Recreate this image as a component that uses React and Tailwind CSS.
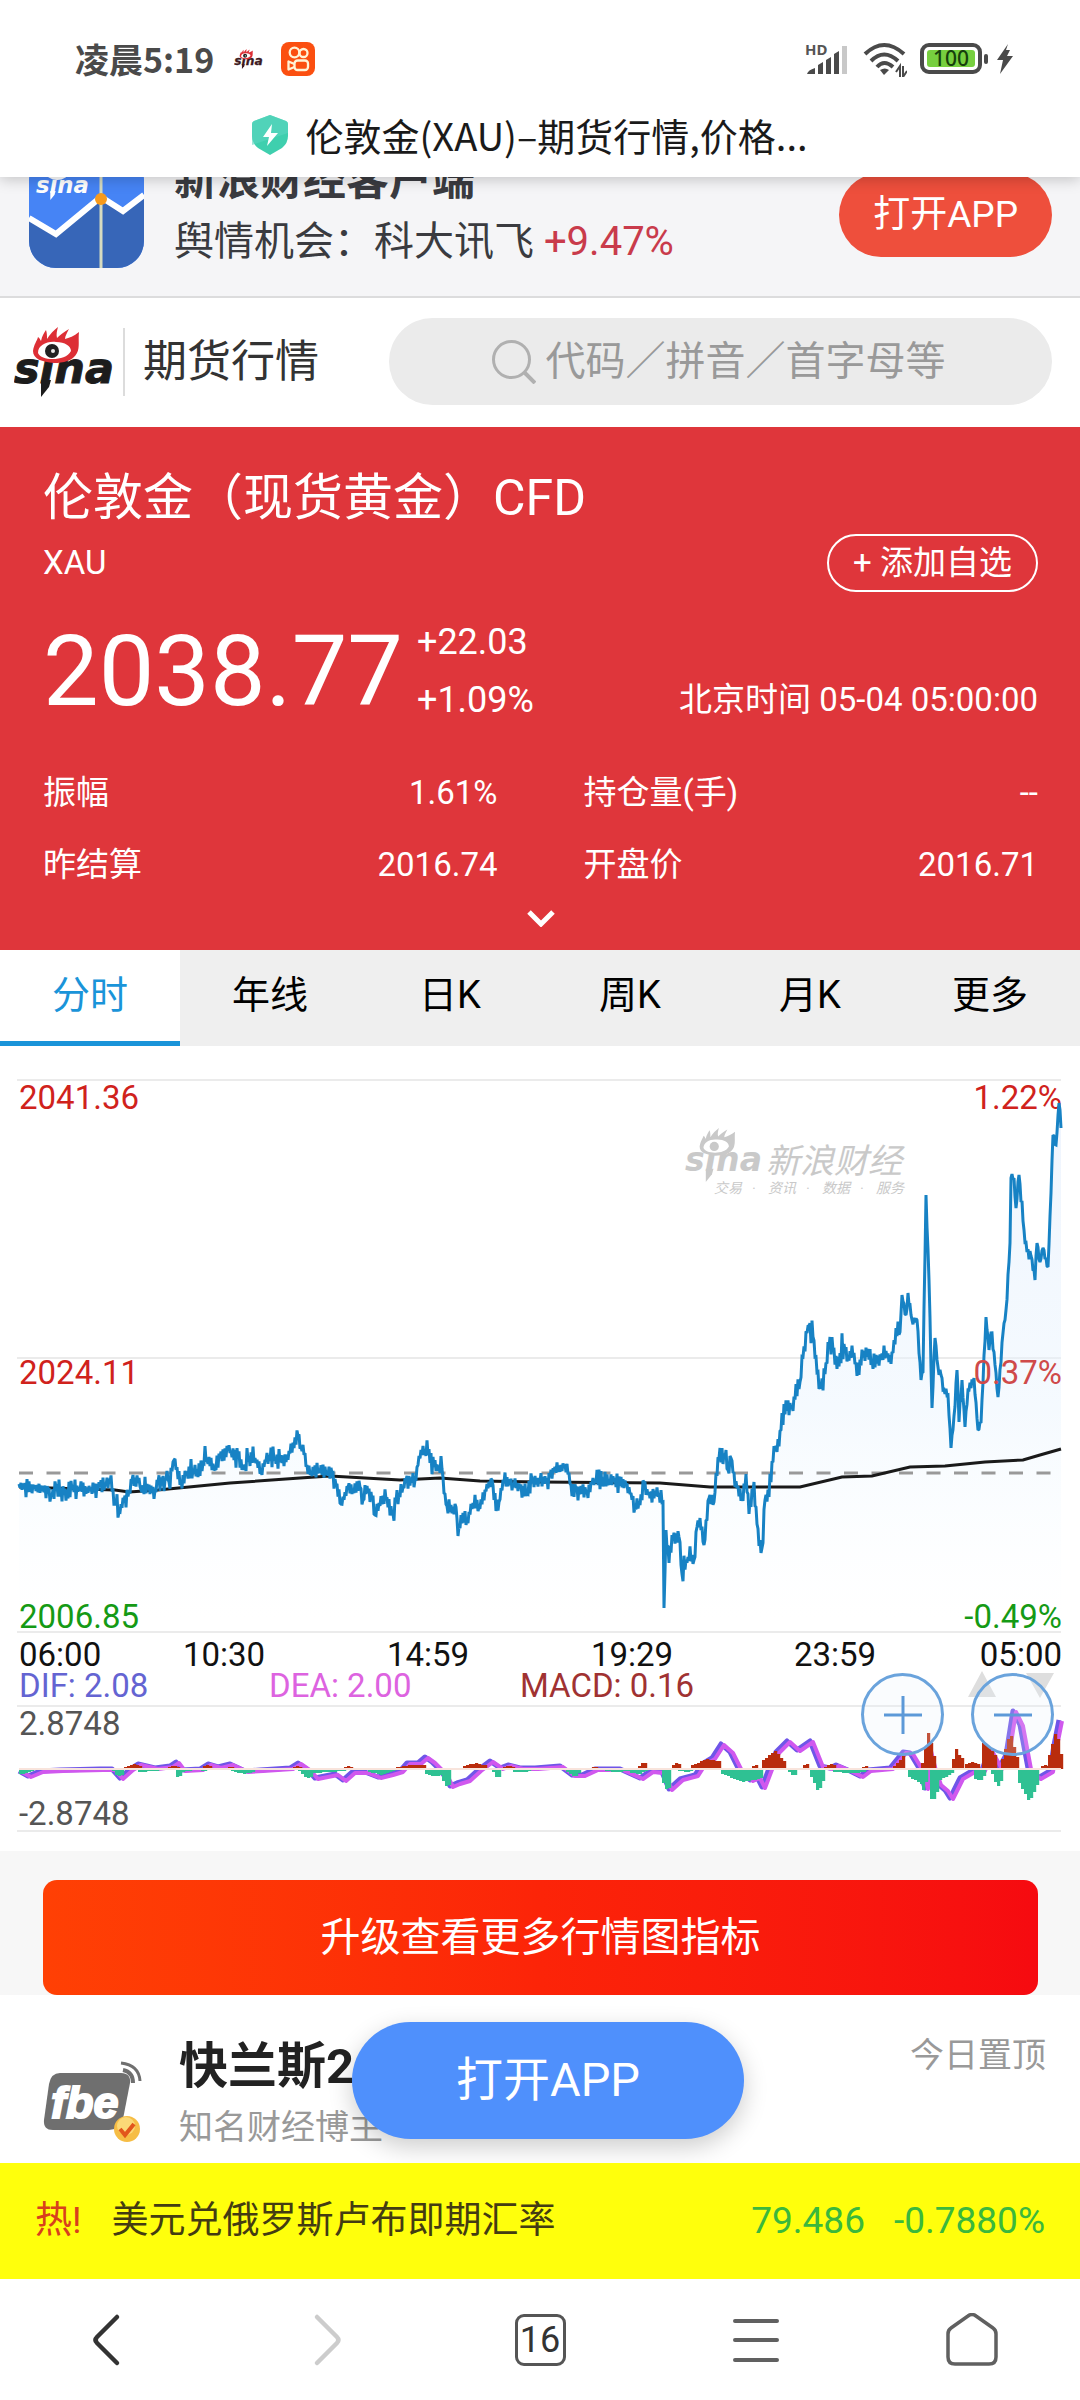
import React from "react";

/* ---------- chart data ---------- */

const PRICE = [
  19,1484,24,1489,34,1488,48,1489,51,1495,56,1487,64,1494,72,1489,79,1488,90,1491,100,1487,105,1484,110,1482,112,1490,
  115,1499,119,1512,124,1500,129,1491,132,1480,138,1483,139,1478,141,1490,148,1488,155,1490,158,1482,165,1480,167,1471,
  169,1482,174,1460,177,1467,180,1485,186,1475,193,1469,200,1476,203,1463,205,1446,207,1460,215,1469,220,1457,226,1457,
  227,1446,230,1453,238,1458,244,1470,249,1456,255,1458,261,1472,265,1460,269,1455,275,1458,286,1462,289,1451,294,1448,
  298,1436,301,1447,305,1453,307,1465,311,1473,319,1470,327,1472,332,1473,336,1485,341,1504,348,1488,353,1490,360,1487,
  363,1500,367,1486,372,1500,375,1515,379,1503,386,1499,393,1514,396,1502,403,1487,406,1480,415,1480,418,1465,421,1450,
  425,1452,429,1449,430,1463,434,1467,442,1469,444,1493,447,1506,450,1512,456,1507,458,1536,461,1515,467,1521,473,1503,
  479,1508,485,1490,492,1480,496,1511,499,1502,503,1480,513,1483,520,1488,527,1494,532,1480,540,1481,547,1478,554,1470,
  564,1467,569,1473,572,1496,576,1489,586,1492,588,1498,591,1482,595,1480,609,1480,615,1478,626,1485,631,1493,635,1507,
  640,1505,644,1482,648,1495,659,1493,663,1502
];
const PRICE_LATE = [
  664,1608,666,1530,669,1563,672,1535,679,1537,682,1574,688,1557,694,1560,697,1527,700,1518,704,1545,709,1498,714,1502,
  716,1473,720,1448,723,1464,726,1450,728,1470,731,1458,733,1473,737,1488,743,1501,746,1474,749,1514,754,1482,756,1507,
  759,1546,762,1548,765,1500,769,1497,774,1446,777,1452,781,1430,784,1404,790,1403,793,1411,796,1384,800,1382,803,1357,
  807,1333,809,1326,813,1337,815,1357,820,1387,825,1374,830,1337,833,1350,837,1369,840,1353,844,1344,848,1356,854,1353,
  857,1376,864,1351,872,1359,881,1360,886,1351,889,1362,893,1353,896,1328,900,1332
];
const PRICE_END = [
  902,1295,906,1315,908,1293,912,1320,917,1320,921,1380,923,1372,926,1195,929,1280,932,1408,935,1338,938,1367,941,1375,
  943,1390,948,1395,951,1448,954,1416,957,1370,959,1422,962,1380,965,1427,968,1390,974,1378,978,1430,981,1423,986,1317,
  989,1350,991,1333,994,1352,998,1397,1003,1333,1006,1310,1010,1243,1011,1178,1014,1178,1016,1208,1019,1175,1024,1230,
  1027,1252,1031,1256,1035,1280,1037,1243,1040,1262,1043,1248,1048,1267,1051,1193,1053,1135,1056,1145,1059,1103,1061,1128
];
const AVERAGE =
  "19,1487 115,1490 129,1492 158,1490 230,1483 300,1478 330,1476 400,1480 440,1478 480,1481 540,1482 660,1483 710,1487 800,1487 842,1477 872,1476 910,1467 945,1466 985,1462 1023,1460 1040,1455 1061,1449";

function pseudoRandom(seed) {
  let s = seed;
  return () => {
    s = (s * 16807) % 2147483647;
    return s / 2147483647;
  };
}

function jitter(list, amp, seed) {
  const rnd = pseudoRandom(seed);
  const out = [];
  let side = 1;
  for (let i = 0; i < list.length - 2; i += 2) {
    const [x1, y1, x2, y2] = list.slice(i, i + 4);
    const n = Math.max(1, Math.round(x2 - x1));
    for (let k = 0; k < n; k++) {
      side = -side;
      const noise = k === 0 ? 0 : side * amp * (0.35 + rnd() * rnd() * 1.6);
      out.push([x1 + ((x2 - x1) * k) / n, y1 + ((y2 - y1) * k) / n + noise]);
    }
  }
  out.push([list[list.length - 2], list[list.length - 1]]);
  return out;
}

const LINE = [...jitter(PRICE, 7, 77), ...jitter(PRICE_LATE, 8, 911), ...jitter(PRICE_END, 4, 35)]
  .map(([x, y]) => `${x.toFixed(1)},${y.toFixed(1)}`)
  .join(" ");

/* [start, end, height at start, peak, height at end] */
const UP = [
  [124,141,2,5,2],[165,180,1,3,2],[200,212,1,4,2],[222,236,1,2,1],[290,303,1,3,1],[344,351,2,3,1],[396,424,2,4,4],[463,486,3,6,3],[500,515,1,4,1],
  [586,600,1,2,1],[638,647,3,7,4],[672,680,4,6,4],[691,721,4,10,7],[752,756,3,5,2],[762,786,9,18,4],[803,809,4,5,3],
  [824,836,2,5,2],[862,866,2,4,2],[893,905,3,9,16],[921,934,6,38,8],[952,963,10,14,9],[955,957,20,20,20],[965,979,5,7,4],
  [982,995,26,22,12],[1001,1017,10,36,8],[1041,1048,3,4,3],[1048,1062,14,39,6]
];
const DOWN = [
  [19,34,5,4,1],[112,122,2,8,5],[138,165,3,2,1],[176,183,8,7,2],[183,207,2,1,2],[231,255,2,5,2],[298,313,2,9,8],
  [313,344,4,3,2],[368,393,3,6,2],[425,441,5,7,6],[442,451,12,19,10],[492,501,3,10,4],[513,530,3,3,2],[566,581,3,8,2],
  [599,630,1,3,2],[630,647,4,5,1],[662,671,14,23,10],[678,695,2,3,1],[721,762,5,13,9],[788,797,3,8,2],[810,824,8,23,8],
  [833,865,3,4,3],[908,922,8,12,16],[919,926,12,22,10],[930,938,30,30,16],[936,953,12,8,3],[974,984,10,12,6],
  [991,1001,5,19,10],[1018,1038,14,33,12]
];

function Bars({ data, up, color }) {
  const zero = 1769;
  const bars = [];
  data.forEach(([a, b, h0, hp, h1], j) => {
    const mid = (a + b) / 2;
    for (let x = a; x < b; x += 3) {
      const h =
        x < mid ? h0 + ((hp - h0) * (x - a)) / (mid - a) : hp + ((h1 - hp) * (x - mid)) / (b - mid);
      const r = Math.round(h);
      bars.push(<rect key={`${j}-${x}`} x={x} y={up ? zero - r : zero} width="3.2" height={r} fill={color} />);
    }
  });
  return <g>{bars}</g>;
}

const MACD_LINE =
  "19,1771 28,1776 40,1771 60,1770 100,1769 112,1769 120,1778 130,1769 138,1764 155,1768 170,1766 176,1762 182,1770 200,1769 208,1764 218,1767 230,1764 245,1771 260,1770 290,1768 298,1763 308,1770 315,1778 335,1774 343,1780 352,1772 365,1772 378,1777 390,1774 400,1771 407,1763 418,1763 425,1757 432,1762 440,1770 446,1778 450,1786 457,1783 467,1780 478,1770 490,1761 500,1768 508,1765 520,1768 535,1768 560,1766 572,1775 582,1775 595,1769 620,1769 640,1778 650,1771 662,1772 669,1789 680,1779 695,1775 702,1764 712,1758 721,1744 730,1752 739,1770 750,1780 757,1777 762,1787 770,1766 776,1752 787,1741 797,1750 810,1741 820,1766 830,1768 836,1765 850,1771 860,1776 868,1770 890,1768 903,1752 910,1753 919,1768 925,1788 928,1750 933,1770 938,1784 945,1790 950,1798 954,1790 960,1778 972,1771 982,1770 989,1750 999,1768 1006,1755 1013,1711 1020,1725 1028,1768 1032,1774 1038,1778 1050,1771 1054,1745 1059,1720";

/* ---------- icons ---------- */

function SinaLogo({ className, ink = "#1c1c1c", red = "#dd2f36", eye = "#fff", pupil = "#222" }) {
  return (
    <svg viewBox="0 0 100 70" className={className} role="img" aria-label="sina">
      <text x="0" y="56" fontFamily="DejaVu Sans" fontWeight="700" fontStyle="italic" fontSize="43" fill={ink} stroke={ink} strokeWidth="1">
        sina
      </text>
      <path d="M27 53 L37 53 L35 60 L27 70 Z" fill={ink} />
      <path
        d="M19 24 C20 17 23 14 24 10 C26 11 26 13 27 14 C28 9 30 6 32 3 C33 6 33 9 33 12 C36 7 40 3 44 0 C43 4 42 7 43 11 C46 8 50 5 55 2 C53 6 51 9 51 12 C55 11 60 9 65 5 C64 13 66 20 63 26 C59 34 49 36 40 36 C28 35 19 32 19 24 Z"
        fill={red}
      />
      <path d="M24 26 C24 18 33 14 42 15 C51 15 57 19 57 24 C54 30 46 32 39 32 C31 32 26 30 24 26 Z" fill={eye} />
      <circle cx="38" cy="24" r="7" fill={pupil} />
      <circle cx="39" cy="24" r="2" fill={eye} opacity="0.9" />
    </svg>
  );
}

function KuaishouIcon() {
  return (
    <svg viewBox="0 0 34 34" className="size-[34px]" role="img" aria-label="kuaishou">
      <rect width="34" height="34" rx="8" fill="#fb4f10" />
      <g fill="none" stroke="#fff3d6" strokeWidth="2.3" strokeLinejoin="round">
        <circle cx="13.500" cy="10.500" r="4.800" />
        <circle cx="22.500" cy="11" r="4" />
        <rect x="13.500" y="18.500" width="13.500" height="9.500" rx="3" />
        <path d="M13.500 22 L7.500 19.500 V27.500 L13.500 25" />
      </g>
    </svg>
  );
}

function StatusIcons() {
  return (
    <div className="flex items-center">
      <svg viewBox="0 0 42 34" className="h-[34px] w-[42px] overflow-visible" role="img" aria-label="signal">
        <text x="0" y="13" fontFamily="Noto Sans" fontWeight="700" fontSize="15" fill="#555">HD</text>
        <path d="M2 32 q1-4 8-6 v6z M13 23 l5-3 v12 h-5z M21 18 l5-3 v17 h-5z M29 12 l5-3 v23 h-5z" fill="#4a4a4a" />
        <rect x="37" y="4" width="5" height="28" fill="#c8c8c8" />
      </svg>
      <svg viewBox="0 0 44 36" className="ml-4 h-[36px] w-[44px]" role="img" aria-label="wifi">
        <g fill="none" stroke="#4a4a4a" strokeWidth="4">
          <path d="M2 13 Q21 -5 41 13" />
          <path d="M8 20 Q21 7 35 20" />
          <path d="M14 26 Q21 18 30 26" />
        </g>
        <path d="M17 29 q5-3 9 0 l-5 5z" fill="#4a4a4a" />
        <path d="M37 36 V25 l-4 6 M40 25 V36 l4-6" fill="none" stroke="#4a4a4a" strokeWidth="2" />
      </svg>
      <svg viewBox="0 0 70 32" className="ml-[13px] h-[32px] w-[70px]" role="img" aria-label="battery">
        <rect x="2" y="2" width="58" height="27" rx="7" fill="#fff" stroke="#4a4a4a" strokeWidth="4" />
        <rect x="7" y="7" width="48" height="17" rx="3" fill="#77cf3f" />
        <rect x="64" y="11" width="4" height="10" rx="2" fill="#4a4a4a" />
        <text x="31" y="23" textAnchor="middle" fontFamily="Noto Sans" fontWeight="500" fontSize="21" fill="#163f0c">100</text>
      </svg>
      <svg viewBox="0 0 18 32" className="ml-[6px] h-[32px] w-[18px]" role="img" aria-label="charging">
        <path d="M12 1 L1 17 H7 L4 31 L17 13 H11 L14 7 H10 Z" fill="#4a4a4a" />
      </svg>
    </div>
  );
}

function ShieldIcon() {
  return (
    <svg viewBox="0 0 36 40" className="h-[40px] w-[36px]" aria-hidden="true">
      <path d="M18 0 L34 6 Q36 7 36 9 V21 Q36 28 30 33 L18 40 L6 33 Q0 28 0 21 V9 Q0 7 2 6 Z" fill="#3fcfae" />
      <path d="M18 0 L34 6 Q36 7 36 9 V18 L0 30 V9 Q0 7 2 6 Z" fill="#5bd6c0" opacity="0.6" />
      <path d="M20 9 L11 22 H17 L15 31 L26 18 H19 Z" fill="#fff" />
    </svg>
  );
}

function FinanceAppIcon() {
  return (
    <svg viewBox="0 0 115 115" className="size-[115px] shrink-0" aria-hidden="true">
      <defs>
        <clipPath id="appClip"><rect width="115" height="115" rx="27" /></clipPath>
      </defs>
      <g clipPath="url(#appClip)">
        <rect width="115" height="115" fill="#4684f5" />
        <path d="M0 65 L27 82 L72 44 L94 60 L115 43 V115 H0 Z" fill="#3766b8" />
        <path d="M0 65 L27 81 L72 44 L94 58 L115 42" fill="none" stroke="#fff" strokeWidth="6" />
        <path d="M72 0 V115" stroke="#d6dbc0" strokeWidth="3" />
        <circle cx="72" cy="46" r="6" fill="#f79a1c" />
        <g transform="translate(7 10) scale(0.53)">
          <text x="0" y="56" fontFamily="DejaVu Sans" fontWeight="700" fontStyle="italic" fontSize="43" fill="#fff">sina</text>
          <path d="M27 53 L37 53 L35 60 L27 70 Z" fill="#fff" />
          <ellipse cx="40" cy="18" rx="21" ry="14" fill="#fff" />
          <ellipse cx="40" cy="18" rx="14" ry="8" fill="#4684f5" />
          <circle cx="40" cy="18" r="5" fill="#fff" />
        </g>
      </g>
    </svg>
  );
}

function FbeAvatar() {
  return (
    <svg viewBox="0 0 100 82" className="h-[82px] w-[100px] shrink-0" role="img" aria-label="fbe">
      <path d="M17 12 H78 Q88 12 87 22 L80 58 Q77 69 66 69 H10 Q0 69 1 59 L6 23 Q8 12 17 12 Z" fill="#6f6f6f" />
      <g fill="none" stroke="#6f6f6f" strokeWidth="3">
        <path d="M78 2 Q96 4 97 20" />
        <path d="M80 9 Q90 11 90 22" strokeWidth="4" />
      </g>
      <text x="8" y="57" fontFamily="Liberation Sans" fontWeight="700" fontStyle="italic" fontSize="45" fill="#fff" stroke="#fff" strokeWidth="2">
        fbe
      </text>
      <circle cx="84" cy="68" r="13" fill="#f6bd45" />
      <circle cx="83" cy="65" r="9" fill="#fbd977" />
      <path d="M77 68 L82 74 L91 63" fill="none" stroke="#e2561b" strokeWidth="4" />
    </svg>
  );
}

/* ---------- sections ---------- */

function StatusHeader() {
  return (
    <header className="relative z-10 h-[177px] bg-white shadow-[0_2px_14px_rgba(0,0,0,0.22)]">
      <div className="flex items-center justify-between pl-[75px] pr-[66px] pt-[35px]">
        <div className="flex items-center">
          <span className="font-['Noto_Sans_CJK_SC',sans-serif] text-[34px] font-bold leading-[48px] text-[#4a4a4a]">凌晨5:19</span>
          <SinaLogo className="ml-5 h-[20px] w-[29px]" ink="#3d1a22" />
          <span className="ml-[18px]"><KuaishouIcon /></span>
        </div>
        <StatusIcons />
      </div>
      <div className="mt-[26px] flex items-center justify-center gap-[17px] pr-5">
        <ShieldIcon />
        <h1 className="font-['Noto_Sans_CJK_SC',sans-serif] text-[38px] leading-[52px] text-[#1a1a1a]">
          伦敦金(XAU)–期货行情,价格...
        </h1>
      </div>
    </header>
  );
}

function AppPromo() {
  return (
    <section className="overflow-hidden border-b-2 border-[#dcdcdd] bg-[#f5f5f7]">
      <div className="-mt-6 flex items-start pb-[19px] pl-[29px] pr-7">
        <FinanceAppIcon />
        <div className="ml-[30px] flex-1 text-[#3a3b40]">
          <p className="text-[43px] font-bold leading-[54px]">新浪财经客户端</p>
          <p className="text-[40px] leading-[70px]">
            舆情机会：科大讯飞 <span className="text-[#c93b4b]">+9.47%</span>
          </p>
        </div>
        <button type="button" className="mt-5 h-[84px] rounded-full bg-[#ee4f3c] px-[34px] text-[37px] leading-[84px] text-white">
          打开APP
        </button>
      </div>
    </section>
  );
}

function SearchBar() {
  return (
    <section className="flex items-center bg-white pb-[22px] pl-[14px] pr-7 pt-[20px]">
      <SinaLogo className="h-[70px] w-[100px] shrink-0" />
      <div className="ml-[9px] h-[68px] w-[2px] bg-[#dcdcdc]" />
      <h2 className="ml-[18px] whitespace-nowrap text-[44px] leading-[60px] text-[#333]">期货行情</h2>
      <label className="ml-[70px] flex h-[87px] flex-1 items-center justify-center rounded-full bg-[#ebebeb]">
        <svg viewBox="0 0 44 44" className="size-[44px] shrink-0" aria-hidden="true">
          <circle cx="19.500" cy="19.500" r="18" fill="none" stroke="#b0b0b0" strokeWidth="3" />
          <path d="M32 32 L43 43" stroke="#b0b0b0" strokeWidth="4" />
        </svg>
        <input
          type="text"
          aria-label="搜索"
          placeholder="代码／拼音／首字母等"
          className="ml-[10px] h-[60px] w-[404px] bg-transparent text-[40px] text-[#333] outline-none placeholder:text-[#999]"
        />
      </label>
    </section>
  );
}

const STATS = [
  ["振幅", "1.61%"],
  ["持仓量(手)", "--"],
  ["昨结算", "2016.74"],
  ["开盘价", "2016.71"],
];

function Quote() {
  return (
    <section className="bg-[#df363b] pb-[23px] pl-[43px] pr-[42px] pt-[41px] text-white">
      <h2 className="text-[50px] leading-[60px]">伦敦金（现货黄金）CFD</h2>
      <div className="mt-[6px] flex items-center justify-between text-[33px]">
        <span>XAU</span>
        <button type="button" className="h-[58px] rounded-full border-2 border-white px-[24px] leading-[52px]">
          + 添加自选
        </button>
      </div>
      <div className="mt-[21px] flex items-end">
        <span className="text-[99px] leading-[116px]">2038.77</span>
        <span className="ml-[14px] flex flex-col text-[36px] leading-[58px]">
          <span>+22.03</span>
          <span>+1.09%</span>
        </span>
        <span className="ml-auto text-[33px] leading-[58px]">北京时间 05-04 05:00:00</span>
      </div>
      <dl className="mt-7 grid grid-cols-2 gap-x-[86px] text-[33px] leading-[72px]">
        {STATS.map(([k, v]) => (
          <div key={k} className="flex justify-between">
            <dt>{k}</dt>
            <dd>{v}</dd>
          </div>
        ))}
      </dl>
      <button type="button" aria-label="展开" className="mx-auto mt-2 block">
        <svg viewBox="0 0 30 18" className="block h-[18px] w-[30px]" aria-hidden="true">
          <path d="M3 3 L15 15 L27 3" fill="none" stroke="#fff" strokeWidth="5" />
        </svg>
      </button>
    </section>
  );
}

function Tabs() {
  const items = ["分时", "年线", "日K", "周K", "月K", "更多"];
  return (
    <nav role="tablist" className="grid grid-cols-6 bg-[#efefef] text-[38px] leading-[91px]">
      {items.map((t, i) => (
        <button
          key={t}
          type="button"
          role="tab"
          aria-selected={i === 0}
          className={
            i === 0
              ? "border-b-[5px] border-[#1a94d9] bg-white text-[#1a94d9]"
              : "border-b-[5px] border-transparent text-black"
          }
        >
          {t}
        </button>
      ))}
    </nav>
  );
}

function Chart() {
  return (
    <section className="relative bg-white">
      <svg viewBox="0 1046 1080 805" className="block h-auto w-full" fontFamily="Roboto, Noto Sans CJK SC, sans-serif" fontSize="33">
        <defs>
          <linearGradient id="area" gradientUnits="userSpaceOnUse" x1="0" y1="1100" x2="0" y2="1620">
            <stop offset="0" stopColor="#e2ecfc" stopOpacity="0.55" />
            <stop offset="0.6" stopColor="#e9f4fe" stopOpacity="0.45" />
            <stop offset="1" stopColor="#f4fbff" stopOpacity="0" />
          </linearGradient>
        </defs>
        <g stroke="#ebebeb" strokeWidth="2">
          <path d="M17 1080 H1061 M17 1358 H1061 M17 1632 H1061 M17 1706 H1061 M17 1831 H1061" />
        </g>
        <polygon points={`19,1632 ${LINE} 1061,1632`} fill="url(#area)" />
        <g fill="#c9c9c9">
          <g transform="translate(685 1128) scale(0.77)">
            <text x="0" y="56" fontFamily="DejaVu Sans" fontWeight="700" fontStyle="italic" fontSize="43">sina</text>
            <path d="M27 53 L37 53 L35 60 L27 70 Z" />
            <path d="M19 24 C20 17 23 14 24 10 C26 11 26 13 27 14 C28 9 30 6 32 3 C33 6 33 9 33 12 C36 7 40 3 44 0 C43 4 42 7 43 11 C46 8 50 5 55 2 C53 6 51 9 51 12 C55 11 60 9 65 5 C64 13 66 20 63 26 C59 34 49 36 40 36 C28 35 19 32 19 24 Z" />
            <path d="M24 26 C24 18 33 14 42 15 C51 15 57 19 57 24 C54 30 46 32 39 32 C31 32 26 30 24 26 Z" fill="#fff" />
            <circle cx="38" cy="24" r="6" />
          </g>
          <text x="766" y="1173" fontSize="34" fontStyle="italic">新浪财经</text>
          <g fontSize="14" fontStyle="italic">
            <text x="714" y="1193">交易</text>
            <text x="752" y="1193">·</text>
            <text x="768" y="1193">资讯</text>
            <text x="806" y="1193">·</text>
            <text x="822" y="1193">数据</text>
            <text x="860" y="1193">·</text>
            <text x="876" y="1193">服务</text>
          </g>
        </g>
        <g fill="#d0221c">
          <text x="19" y="1109">2041.36</text>
          <text x="19" y="1384">2024.11</text>
          <text x="1062" y="1109" textAnchor="end">1.22%</text>
        </g>
        <path d="M19 1473 H1061" stroke="#999" strokeWidth="3" strokeDasharray="14 13.5" />
        <polyline points={AVERAGE} fill="none" stroke="#1a1a1a" strokeWidth="3" />
        <polyline points={LINE} fill="none" stroke="#1782c4" strokeWidth="3" strokeLinejoin="miter" strokeMiterlimit="2" />
        <text x="1062" y="1384" textAnchor="end" fill="#cf4a4a">0.37%</text>
        <g fill="#159a15">
          <text x="19" y="1628">2006.85</text>
          <text x="1062" y="1628" textAnchor="end">-0.49%</text>
        </g>
        <g fill="#111">
          <text x="19" y="1666">06:00</text>
          <text x="224" y="1666" textAnchor="middle">10:30</text>
          <text x="428" y="1666" textAnchor="middle">14:59</text>
          <text x="632" y="1666" textAnchor="middle">19:29</text>
          <text x="835" y="1666" textAnchor="middle">23:59</text>
          <text x="1062" y="1666" textAnchor="end">05:00</text>
        </g>
        <text x="19" y="1697" fill="#6464d2">DIF: 2.08</text>
        <text x="269" y="1697" fill="#dd63e0">DEA: 2.00</text>
        <text x="520" y="1697" fill="#a03232">MACD: 0.16</text>
        <g fill="#555">
          <text x="19" y="1735">2.8748</text>
          <text x="19" y="1825">-2.8748</text>
        </g>
        <path d="M968 1697 L982 1671 L996 1697 Z M1026 1673 H1054 L1040 1698 Z" fill="#dedede" />
        <polyline points={MACD_LINE} fill="none" stroke="#6f55e8" strokeWidth="5" strokeLinejoin="round" />
        <polyline points={MACD_LINE} fill="none" stroke="#d058ee" strokeWidth="4" strokeLinejoin="round" transform="translate(3 1)" />
        <Bars data={UP} up color="#b92c0d" />
        <Bars data={DOWN} color="#2fc193" />
        <path d="M19 1769 H1061" stroke="#f8e4dc" strokeWidth="2" />
      </svg>
      <div className="absolute bottom-[95px] right-[26px] flex gap-[27px]">
        {["+", "-"].map((s) => (
          <button
            key={s}
            type="button"
            aria-label={s === "+" ? "放大" : "缩小"}
            className="flex size-[83px] items-center justify-center rounded-full border-[3px] border-[#6aa3dc] bg-[#e8f2fc]/20"
          >
            <svg viewBox="0 0 40 40" className="size-[40px]" aria-hidden="true">
              <path d={s === "+" ? "M1 20 H39 M20 1 V39" : "M1 20 H39"} stroke="#5c99d8" strokeWidth="3" />
            </svg>
          </button>
        ))}
      </div>
    </section>
  );
}

function Upgrade() {
  return (
    <section className="bg-[#f7f7f7] pl-[43px] pr-[42px] pt-[29px]">
      <button
        type="button"
        className="block h-[115px] w-full rounded-[14px] bg-gradient-to-r from-[#ff4004] via-[#fc2408] via-50% to-[#f60a10] text-[40px] text-white"
      >
        升级查看更多行情图指标
      </button>
    </section>
  );
}

function BloggerRow() {
  return (
    <section className="relative flex items-start bg-white pb-[10px] pl-[43px] pr-[34px] pt-[38px]">
      <div className="mt-[28px]"><FbeAvatar /></div>
      <div className="ml-[36px]">
        <p className="text-[49px] font-bold leading-[68px] text-[#222]">快兰斯2</p>
        <p className="text-[34px] leading-[52px] text-[#999]">知名财经博主</p>
      </div>
      <span className="ml-auto text-[34px] leading-[44px] text-[#999]">今日置顶</span>
      <button
        type="button"
        className="absolute left-1/2 top-[27px] h-[117px] -translate-x-[188px] rounded-full bg-[#4f90fc] px-[104px] text-[47px] text-white shadow-[0_8px_24px_rgba(0,0,0,0.2)]"
      >
        打开APP
      </button>
    </section>
  );
}

function HotTicker() {
  return (
    <a href="#hot" className="relative flex h-[116px] items-center bg-[#ffff0c] px-[35px] text-[37px] text-[#443c12]">
      <span className="text-[#d8401c]">热!</span>
      <span className="ml-[30px]">美元兑俄罗斯卢布即期汇率</span>
      <span className="ml-auto text-[#3bb83c]">79.486</span>
      <span className="ml-[29px] text-[#3bb83c]">-0.7880%</span>
    </a>
  );
}

function BrowserNav() {
  return (
    <nav className="grid h-[121px] grid-cols-5 items-center justify-items-center bg-white">
      <button type="button" aria-label="后退">
        <svg viewBox="0 0 54 54" className="size-[54px]" fill="none" stroke="#333" strokeWidth="4.500" strokeLinecap="round" strokeLinejoin="round">
          <path d="M36 4 L16 24 Q13 27 16 30 L36 50" />
        </svg>
      </button>
      <button type="button" aria-label="前进">
        <svg viewBox="0 0 54 54" className="size-[54px]" fill="none" stroke="#ccc" strokeWidth="4.500" strokeLinecap="round" strokeLinejoin="round">
          <path d="M20 4 L40 24 Q43 27 40 30 L20 50" />
        </svg>
      </button>
      <button
        type="button"
        className="h-[52px] w-[51px] rounded-[9px] border-[3px] border-[#555] text-center text-[36px] leading-[46px] text-[#333]"
      >
        16
      </button>
      <button type="button" aria-label="菜单">
        <svg viewBox="0 0 54 54" className="size-[54px]" fill="none" stroke="#606060" strokeWidth="4" strokeLinecap="round">
          <path d="M6 8 H48 M6 27 H48 M6 47 H48" />
        </svg>
      </button>
      <button type="button" aria-label="主页">
        <svg viewBox="0 0 54 54" className="size-[54px]" fill="none" stroke="#606060" strokeWidth="3.500" strokeLinejoin="round">
          <path d="M23 3 Q27 0 31 3 L48 15 Q51 17 51 21 V44 Q51 51 44 51 H10 Q3 51 3 44 V21 Q3 17 6 15 Z" />
        </svg>
      </button>
    </nav>
  );
}

export default function App() {
  return (
    <div className="w-full bg-white font-['Roboto','Noto_Sans_CJK_SC',sans-serif]">
      <StatusHeader />
      <main>
        <AppPromo />
        <SearchBar />
        <Quote />
        <Tabs />
        <Chart />
        <Upgrade />
        <BloggerRow />
      </main>
      <HotTicker />
      <BrowserNav />
    </div>
  );
}
